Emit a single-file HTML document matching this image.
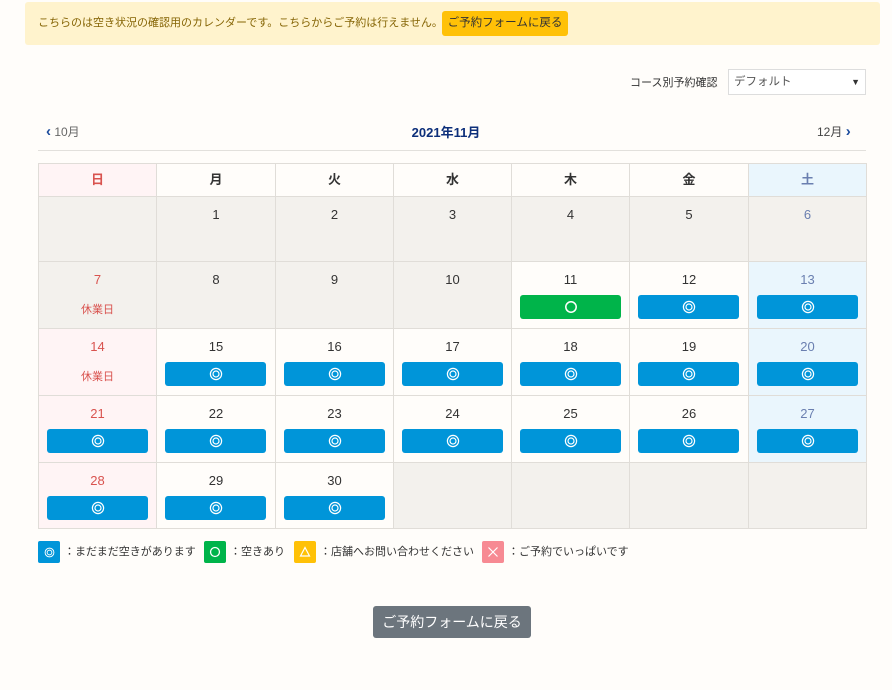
<!DOCTYPE html>
<html><head><meta charset="utf-8"><style>
*{box-sizing:border-box;margin:0;padding:0}
body{width:892px;height:690px;background:#fffdfa;font-family:"Liberation Sans","Noto Sans CJK JP",sans-serif;color:#333;position:relative;overflow:hidden}
.banner{position:absolute;left:25px;top:2px;width:855px;height:43px;background:#fff3cd;border-radius:3px;font-size:11px;color:#856404;padding-left:13px;line-height:43px}
.banner .b{position:absolute;left:417px;top:9px;width:126px;height:25px;background:#ffc107;border-radius:3px;color:#333;line-height:25px;text-align:center;font-size:11.5px}
.lbl{position:absolute;left:630px;top:74px;font-size:11px;color:#333}
.sel{position:absolute;left:728px;top:69px;width:138px;height:26px;background:#fff;border:1px solid #ddd;font-size:11.5px;color:#555;padding-left:5px;line-height:24px}
.sel span{position:absolute;right:5px;top:0;font-size:9px;color:#333}
.prev{position:absolute;left:46px;top:123px;font-size:12px;color:#666}
.next{position:absolute;left:817px;top:123px;font-size:12px;color:#444}
.ar{color:#1a4a9c;font-weight:bold;font-size:15px}
.title{position:absolute;left:0;width:892px;text-align:center;top:122px;font-size:13px;font-weight:bold;color:#0d2f7a}
.hr{position:absolute;left:38px;top:150px;width:828px;height:1px;background:#e2e0dc}
.grid{position:absolute;left:38px;top:163px;display:grid;grid-template-columns:118px 119px 118px 118px 118px 119px 118px;grid-template-rows:33px 65px 67px 67px 67px 66px;border-left:1px solid #e0ddd8;border-top:1px solid #e0ddd8}
.grid>div{border-right:1px solid #e0ddd8;border-bottom:1px solid #e0ddd8;position:relative;text-align:center;font-size:13px;background:#fffdfa}
.h{font-size:11px;font-weight:bold;line-height:32px}
.g{background:#f3f1ed!important}
.su{background:#fff4f5!important;color:#d9534f}
.sa{background:#eaf6fd!important;color:#6a7fb0}
.n{display:block;margin-top:10px;line-height:16px}
.k{display:block;font-size:11px;color:#d9534f;margin-top:13px}
.bt{position:absolute;left:8px;top:33px;width:101px;height:24px;border-radius:3px;background:#0095d9;display:flex;align-items:center;justify-content:center}
.gr{background:#00b44a}
.leg{position:absolute;top:541px;font-size:11px;color:#333;line-height:22px;display:flex}
.sq{display:inline-flex;align-items:center;justify-content:center;width:22px;height:22px;border-radius:2px;color:#fff;margin-right:4px;font-size:12px}
.back{position:absolute;left:373px;top:606px;width:158px;height:32px;background:#6c757d;border-radius:3px;color:#fff;font-size:14px;line-height:32px;text-align:center}
</style></head><body>
<div class="banner">こちらのは空き状況の確認用のカレンダーです。こちらからご予約は行えません。<div class="b">ご予約フォームに戻る</div></div>
<div class="lbl">コース別予約確認</div>
<div class="sel">デフォルト<span>▼</span></div>
<div class="prev"><span class="ar">‹</span> 10月</div>
<div class="title">2021年11月</div>
<div class="next">12月 <span class="ar">›</span></div>
<div class="hr"></div>
<svg width="0" height="0" style="position:absolute"><defs>
<symbol id="dc" viewBox="0 0 14 14"><circle cx="7" cy="7" r="5.6" fill="none" stroke="#fff" stroke-width="1.2"/><circle cx="7" cy="7" r="3" fill="none" stroke="#fff" stroke-width="1.2"/></symbol>
<symbol id="oc" viewBox="0 0 14 14"><circle cx="7" cy="7" r="5.2" fill="none" stroke="#fff" stroke-width="1.5"/></symbol>
</defs></svg>
<div class="grid">
<div class="h su">日</div><div class="h">月</div><div class="h">火</div><div class="h">水</div><div class="h">木</div><div class="h">金</div><div class="h sa">土</div>
<div class="g"></div><div class="g"><span class="n">1</span></div><div class="g"><span class="n">2</span></div><div class="g"><span class="n">3</span></div><div class="g"><span class="n">4</span></div><div class="g"><span class="n">5</span></div><div class="g" style="color:#6a7fb0"><span class="n">6</span></div>
<div class="g" style="color:#d9534f"><span class="n">7</span><span class="k">休業日</span></div><div class="g"><span class="n">8</span></div><div class="g"><span class="n">9</span></div><div class="g"><span class="n">10</span></div><div><span class="n">11</span><div class="bt gr"><svg width="14" height="14"><use href="#oc"/></svg></div></div><div><span class="n">12</span><div class="bt"><svg width="14" height="14"><use href="#dc"/></svg></div></div><div class="sa"><span class="n">13</span><div class="bt"><svg width="14" height="14"><use href="#dc"/></svg></div></div>
<div class="su"><span class="n">14</span><span class="k">休業日</span></div><div><span class="n">15</span><div class="bt"><svg width="14" height="14"><use href="#dc"/></svg></div></div><div><span class="n">16</span><div class="bt"><svg width="14" height="14"><use href="#dc"/></svg></div></div><div><span class="n">17</span><div class="bt"><svg width="14" height="14"><use href="#dc"/></svg></div></div><div><span class="n">18</span><div class="bt"><svg width="14" height="14"><use href="#dc"/></svg></div></div><div><span class="n">19</span><div class="bt"><svg width="14" height="14"><use href="#dc"/></svg></div></div><div class="sa"><span class="n">20</span><div class="bt"><svg width="14" height="14"><use href="#dc"/></svg></div></div>
<div class="su"><span class="n">21</span><div class="bt"><svg width="14" height="14"><use href="#dc"/></svg></div></div><div><span class="n">22</span><div class="bt"><svg width="14" height="14"><use href="#dc"/></svg></div></div><div><span class="n">23</span><div class="bt"><svg width="14" height="14"><use href="#dc"/></svg></div></div><div><span class="n">24</span><div class="bt"><svg width="14" height="14"><use href="#dc"/></svg></div></div><div><span class="n">25</span><div class="bt"><svg width="14" height="14"><use href="#dc"/></svg></div></div><div><span class="n">26</span><div class="bt"><svg width="14" height="14"><use href="#dc"/></svg></div></div><div class="sa"><span class="n">27</span><div class="bt"><svg width="14" height="14"><use href="#dc"/></svg></div></div>
<div class="su"><span class="n">28</span><div class="bt"><svg width="14" height="14"><use href="#dc"/></svg></div></div><div><span class="n">29</span><div class="bt"><svg width="14" height="14"><use href="#dc"/></svg></div></div><div><span class="n">30</span><div class="bt"><svg width="14" height="14"><use href="#dc"/></svg></div></div><div class="g"></div><div class="g"></div><div class="g"></div><div class="g"></div>
</div>
<div class="leg" style="left:38px"><span class="sq" style="background:#0095d9"><svg width="11" height="11"><use href="#dc"/></svg></span>：まだまだ空きがあります</div>
<div class="leg" style="left:204px"><span class="sq" style="background:#00b44a"><svg width="12" height="12"><use href="#oc"/></svg></span>：空きあり</div>
<div class="leg" style="left:294px"><span class="sq" style="background:#ffc107"><svg width="12" height="12" viewBox="0 0 12 12"><path d="M6 1.5 L10.5 10 L1.5 10 Z" fill="none" stroke="#fff" stroke-width="1.2"/></svg></span>：店舗へお問い合わせください</div>
<div class="leg" style="left:482px"><span class="sq" style="background:#f78a93"><svg width="12" height="12" viewBox="0 0 12 12"><path d="M1.5 1.5 L10.5 10.5 M10.5 1.5 L1.5 10.5" stroke="#fff" stroke-width="1.2"/></svg></span>：ご予約でいっぱいです</div>
<div class="back">ご予約フォームに戻る</div>
</body></html>
